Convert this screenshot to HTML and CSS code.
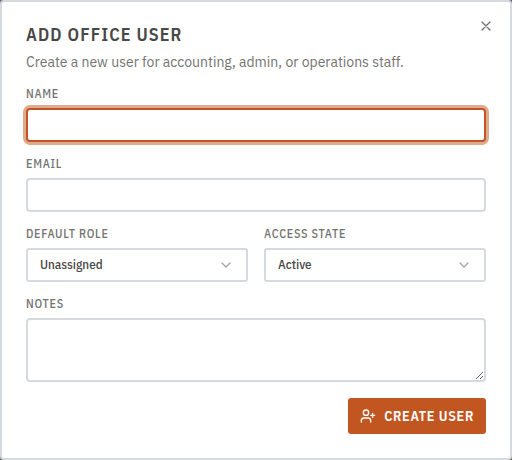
FILE: index.html
```
<!DOCTYPE html>
<html lang="en">
<head>
    <meta charset="UTF-8">
    <title>Add Office User</title>
    <meta name="viewport" content="width=device-width, initial-scale=1">
    <link rel="stylesheet" href="styles.css">
</head>
<body>
    <div class="dialog" role="dialog" aria-labelledby="dialogTitle">
        <button class="close" type="button" aria-label="Close">
            <svg viewBox="0 0 24 24"><path d="M18 6 6 18M6 6l12 12"/></svg>
        </button>
        <header>
            <h2 id="dialogTitle">Add Office User</h2>
            <p>Create a new user for accounting, admin, or operations staff.</p>
        </header>
        <form>
            <div class="field">
                <label for="name">Name</label>
                <input id="name" type="text" autofocus>
            </div>
            <div class="field">
                <label for="email">Email</label>
                <input id="email" type="email">
            </div>
            <div class="row">
                <div class="field">
                    <label for="role">Default Role</label>
                    <div class="select">
                        <select id="role">
                            <option>Unassigned</option>
                        </select>
                        <svg viewBox="0 0 24 24"><path d="m6 9 6 6 6-6"/></svg>
                    </div>
                </div>
                <div class="field">
                    <label for="access">Access State</label>
                    <div class="select">
                        <select id="access">
                            <option>Active</option>
                        </select>
                        <svg viewBox="0 0 24 24"><path d="m6 9 6 6 6-6"/></svg>
                    </div>
                </div>
            </div>
            <div class="field">
                <label for="notes">Notes</label>
                <textarea id="notes"></textarea>
            </div>
            <footer>
                <button class="submit" type="submit">
                    <svg viewBox="0 0 24 24"><circle cx="9" cy="7" r="4"/><path d="M16 21v-2a4 4 0 0 0-4-4H6a4 4 0 0 0-4 4v2M19 8v6M22 11h-6"/></svg>
                    Create User
                </button>
            </footer>
        </form>
    </div>
    <script>
        document.getElementById('name').focus();
    </script>
</body>
</html>
```
FILE: styles.css
```
* { box-sizing: border-box; }
body { margin: 0; background: #6b6866; color: #484846; font-family: "IBM Plex Sans", Roboto, sans-serif; }
h2, label, input, select, textarea, .submit { font-family: "IBM Plex Sans Condensed", "IBM Plex Sans", Roboto, sans-serif; }
svg { fill: none; stroke: currentColor; stroke-width: 2; stroke-linecap: round; stroke-linejoin: round; }
.dialog { position: relative; padding: 24px; background: #fff; border: 2px solid #d5d9e0; border-radius: 4px; }
.close { position: absolute; top: 16px; right: 16px; display: flex; padding: 0; background: none; border: none; color: #737370; cursor: pointer; }
.close svg { width: 16px; height: 16px; }
header { margin-bottom: 16px; }
h2 { margin: 0 0 8px; font-size: 18px; line-height: 18px; font-weight: 600; letter-spacing: 0.06em; text-transform: uppercase; }
header p { margin: 0; font-size: 14px; line-height: 20px; color: #737370; }
form { display: flex; flex-direction: column; gap: 16px; }
.row { display: grid; grid-template-columns: 1fr 1fr; gap: 16px; }
.field { display: flex; flex-direction: column; gap: 8px; }
label { font-size: 12px; line-height: 12px; font-weight: 500; letter-spacing: 0.06em; text-transform: uppercase; color: #737370; }
input, select, textarea { display: block; width: 100%; height: 34px; padding: 0 12px; background: #fff; border: 2px solid #d5d9e0; border-radius: 4px; color: #484846; font-size: 13px; font-weight: 500; outline: none; }
input:focus, select:focus, textarea:focus { border-color: #c25621; box-shadow: 0 0 0 3px #e0aa90; }
textarea { height: 64px; padding: 8px 12px; resize: vertical; }
.select { position: relative; }
.select select { appearance: none; padding-bottom: 2px; border-radius: 3px; }
.select svg { position: absolute; top: 9px; right: 14px; width: 16px; height: 16px; color: #a4a4a2; pointer-events: none; }
footer { display: flex; justify-content: flex-end; }
.submit { display: flex; align-items: center; gap: 8px; height: 36px; padding: 0 12px; background: #c25621; border: none; border-radius: 3px; color: #fff; font-size: 14px; font-weight: 600; letter-spacing: 0.05em; text-transform: uppercase; cursor: pointer; }
.submit svg { width: 16px; height: 16px; }
```
